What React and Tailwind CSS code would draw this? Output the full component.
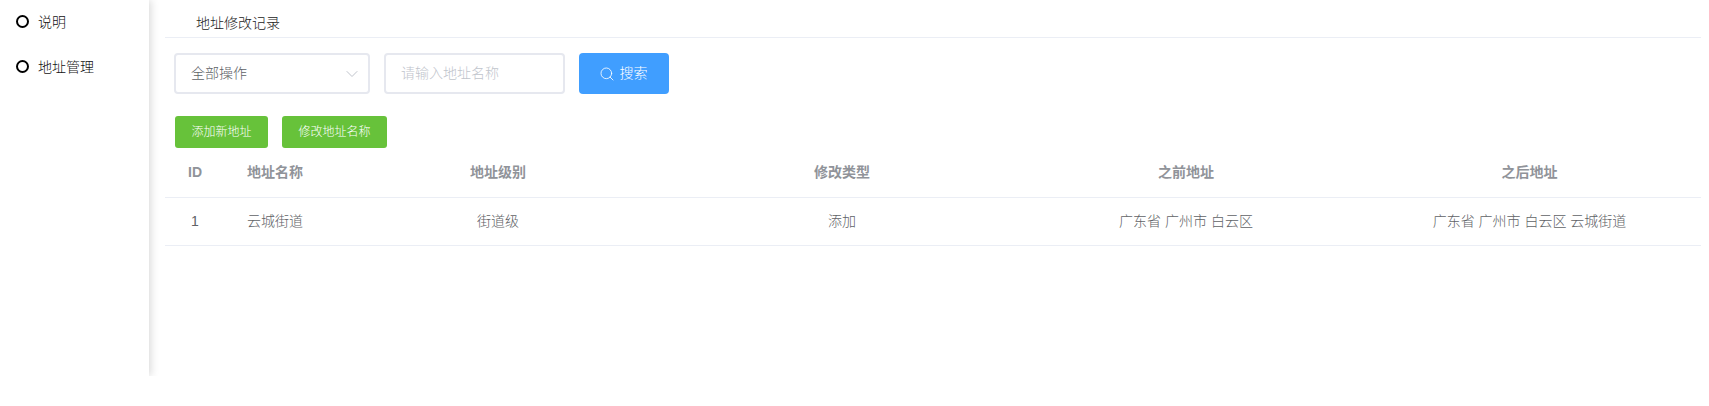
import React from "react";
import { ChevronDown, Search } from "lucide-react";

function SideItem({ label, className }) {
  return (
    <div className={"flex items-center gap-[9px] pl-[16px] text-sm font-light text-[#111] " + className}>
      <span className="-mt-px box-border h-[13px] w-[13px] rounded-full border-2 border-black" />
      <span>{label}</span>
    </div>
  );
}

export default function App() {
  return (
    <div className="flex h-[376px] w-[1709px] bg-white font-['Liberation_Sans','Noto_Sans_CJK_SC',sans-serif]">
      <aside className="w-[149px] shrink-0 bg-white pt-[12px] shadow-[2px_0_8px_rgba(0,0,0,0.15)]">
        <SideItem label="说明" className="h-[20px]" />
        <SideItem label="地址管理" className="mt-[25px] h-[20px]" />
      </aside>
      <main className="ml-4 w-[1536px] shrink-0">
        <div className="h-[38px] border-b border-[#ebeef5] pl-[31px] pt-[13px] text-sm font-light leading-[20px] text-[#222]">
          地址修改记录
        </div>
        <div className="mt-[15px] flex gap-[14px] pl-[9px]">
          <div className="box-border flex h-[41px] w-[196px] items-center justify-between rounded border-2 border-[#e6e8ef] pl-[15px] pr-[6px] text-sm font-light text-[#606266]">
            <span className="-mt-px">全部操作</span>
            <ChevronDown size={20} strokeWidth={1.2} className="text-[#c0c4cc]" />
          </div>
          <div className="box-border flex h-[41px] w-[181px] items-center rounded border-2 border-[#e6e8ef] pl-[15px] text-sm font-light text-[#c0c4cc]">
            <span className="-mt-px">请输入地址名称</span>
          </div>
          <button className="flex h-[41px] w-[90px] items-center justify-center gap-[5px] rounded bg-[#409eff] pr-[2px] text-sm font-light text-white">
            <Search size={16} strokeWidth={1.25} />
            <span className="-mt-px">搜索</span>
          </button>
        </div>
        <div className="mt-[22px] flex gap-[14px] pl-[10px]">
          <button className="h-[32px] w-[93px] rounded-[3px] bg-[#67c23a] text-xs font-light text-white">添加新地址</button>
          <button className="h-[32px] w-[105px] rounded-[3px] bg-[#67c23a] text-xs font-light text-white">修改地址名称</button>
        </div>
        <table className="w-[1536px] table-fixed border-collapse text-sm">
          <colgroup>
            <col className="w-[60px]" />
            <col className="w-[101px]" />
            <col className="w-[344px]" />
            <col className="w-[344px]" />
            <col className="w-[344px]" />
            <col className="w-[343px]" />
          </colgroup>
          <thead>
            <tr className="h-[49px] border-b border-[#ebeef5] text-center text-[#909399]">
              <th className="font-semibold">ID</th>
              <th className="pl-[22px] text-left font-semibold">地址名称</th>
              <th className="font-semibold">地址级别</th>
              <th className="font-semibold">修改类型</th>
              <th className="font-semibold">之前地址</th>
              <th className="font-semibold">之后地址</th>
            </tr>
          </thead>
          <tbody>
            <tr className="h-[48px] border-b border-[#ebeef5] text-center font-light text-[#606266]">
              <td className="pb-px">1</td>
              <td className="pb-px pl-[22px] text-left">云城街道</td>
              <td className="pb-px">街道级</td>
              <td className="pb-px">添加</td>
              <td className="pb-px">广东省 广州市 白云区</td>
              <td className="pb-px">广东省 广州市 白云区 云城街道</td>
            </tr>
          </tbody>
        </table>
      </main>
    </div>
  );
}
